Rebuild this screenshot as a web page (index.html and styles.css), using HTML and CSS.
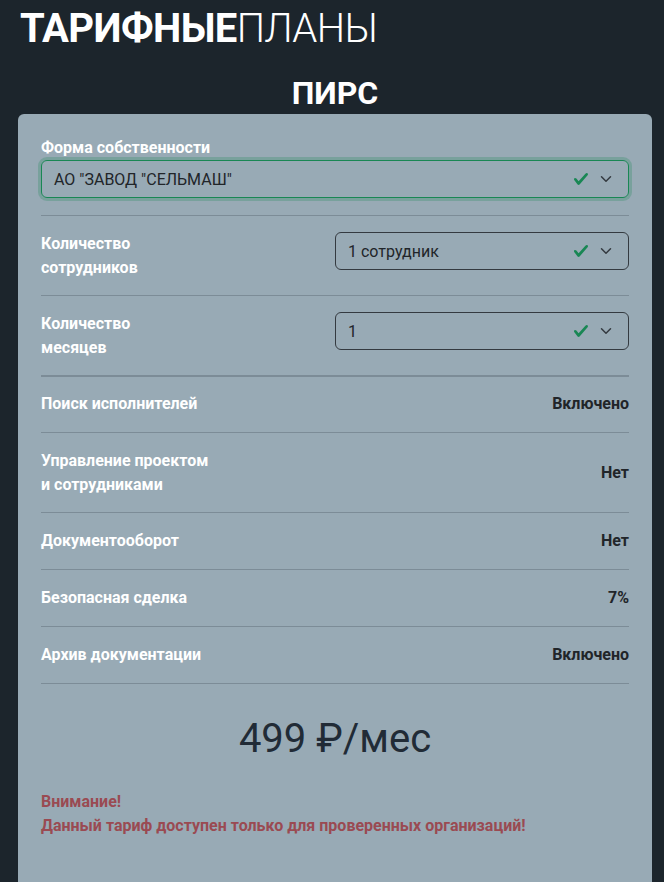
FILE: index.html
```html
<!DOCTYPE html>
<html lang="ru">
<head>
<meta charset="utf-8">
<title>Тарифные планы</title>
<link rel="stylesheet" href="styles.css">
</head>
<body>
<div class="page">
  <h1 class="title"><span class="title-bold">ТАРИФНЫЕ</span><span class="title-light">ПЛАНЫ</span></h1>
  <h2 class="plan">ПИРС</h2>
  <div class="card">
    <div class="row row-stack">
      <div class="label">Форма собственности</div>
      <div class="select select-focus">
        <span class="select-text">АО "ЗАВОД "СЕЛЬМАШ"</span>
        <svg class="check" viewBox="0 0 8 8" width="16" height="16"><path fill="#198754" d="M2.3 6.73.6 4.53c-.4-1.04.46-1.4 1.1-.8l1.1 1.4 3.4-3.8c.6-.63 1.6-.27 1.2.7l-4 4.6c-.43.5-.8.4-1.1.1z"/></svg>
        <svg class="chev" viewBox="0 0 16 16" width="12" height="12"><path fill="none" stroke="#343a40" stroke-width="2" stroke-linecap="round" stroke-linejoin="round" d="m2 5 6 6 6-6"/></svg>
      </div>
    </div>
    <div class="row row-split">
      <div class="label">Количество<br>сотрудников</div>
      <div class="select">
        <span class="select-text">1 сотрудник</span>
        <svg class="check" viewBox="0 0 8 8" width="16" height="16"><path fill="#198754" d="M2.3 6.73.6 4.53c-.4-1.04.46-1.4 1.1-.8l1.1 1.4 3.4-3.8c.6-.63 1.6-.27 1.2.7l-4 4.6c-.43.5-.8.4-1.1.1z"/></svg>
        <svg class="chev" viewBox="0 0 16 16" width="12" height="12"><path fill="none" stroke="#343a40" stroke-width="2" stroke-linecap="round" stroke-linejoin="round" d="m2 5 6 6 6-6"/></svg>
      </div>
    </div>
    <div class="row row-split row-thick">
      <div class="label">Количество<br>месяцев</div>
      <div class="select">
        <span class="select-text">1</span>
        <svg class="check" viewBox="0 0 8 8" width="16" height="16"><path fill="#198754" d="M2.3 6.73.6 4.53c-.4-1.04.46-1.4 1.1-.8l1.1 1.4 3.4-3.8c.6-.63 1.6-.27 1.2.7l-4 4.6c-.43.5-.8.4-1.1.1z"/></svg>
        <svg class="chev" viewBox="0 0 16 16" width="12" height="12"><path fill="none" stroke="#343a40" stroke-width="2" stroke-linecap="round" stroke-linejoin="round" d="m2 5 6 6 6-6"/></svg>
      </div>
    </div>
    <div class="row row-feature row-first">
      <div class="label">Поиск исполнителей</div>
      <div class="value">Включено</div>
    </div>
    <div class="row row-feature row-double">
      <div class="label">Управление проектом<br>и сотрудниками</div>
      <div class="value">Нет</div>
    </div>
    <div class="row row-feature">
      <div class="label">Документооборот</div>
      <div class="value">Нет</div>
    </div>
    <div class="row row-feature">
      <div class="label">Безопасная сделка</div>
      <div class="value">7%</div>
    </div>
    <div class="row row-feature">
      <div class="label">Архив документации</div>
      <div class="value">Включено</div>
    </div>
    <div class="price">499 ₽/мес</div>
    <div class="warning">Внимание!<br>Данный тариф доступен только для проверенных организаций!</div>
  </div>
</div>
</body>
</html>
```

FILE: styles.css
```css
html, body {
  margin: 0;
  padding: 0;
  background: #1c252c;
  font-family: Roboto, "Noto Sans", sans-serif;
  overflow: hidden;
}
.page {
  padding: 0 12px 0 18px;
  height: 882px;
  box-sizing: border-box;
  overflow: hidden;
}
.title {
  margin: 0;
  padding: 5px 0 0 2px;
  font-size: 40px;
  line-height: 48px;
  color: #fff;
  letter-spacing: -0.6px;
}
.title-bold { font-weight: 700; }
.title-light { font-weight: 300; }
.plan {
  margin: 21px 0 0 0;
  text-align: center;
  font-size: 32px;
  line-height: 38px;
  font-weight: 700;
  color: #fff;
}
.card {
  margin-top: 2px;
  background: #98aab5;
  border-radius: 6px 6px 0 0;
  padding: 23px 23px 60px 23px;
  min-height: 800px;
}
.row {
  border-bottom: 1px solid #7c8c97;
  padding: 16px 0;
}
.row-stack {
  padding-top: 0;
  padding-bottom: 17px;
}
.row-split {
  display: flex;
  align-items: flex-start;
  padding-bottom: 15px;
}
.row-split .label {
  width: 294px;
  flex: none;
}
.row-split .select {
  flex: 1;
}
.row-thick {
  border-bottom: 2px solid #7c8c97;
}
.row-feature {
  display: flex;
  justify-content: space-between;
  align-items: center;
  padding: 16px 0;
}
.row-first {
  padding-top: 15px;
}
.row-double {
  padding: 15.5px 0;
}
.label {
  color: #fff;
  font-weight: 700;
  font-size: 16px;
  line-height: 24px;
}
.row-stack .label {
  line-height: 22px;
  margin-bottom: 1px;
}
.value {
  color: #212529;
  font-weight: 700;
  font-size: 16px;
  line-height: 24px;
}
.select {
  display: flex;
  align-items: center;
  height: 38px;
  box-sizing: border-box;
  border: 1px solid #343a40;
  border-radius: 6px;
  padding: 0 16px 0 12px;
  color: #212529;
  font-size: 16px;
}
.select-focus {
  border-color: #198754;
  box-shadow: 0 0 0 3px rgba(25, 135, 84, 0.25);
}
.select-text {
  flex: 1;
  white-space: nowrap;
}
.check {
  margin-right: 11px;
}
.price {
  text-align: center;
  color: #212b36;
  font-size: 40px;
  line-height: 48px;
  margin-top: 31px;
}
.warning {
  margin-top: 27px;
  color: #9a4a52;
  font-weight: 700;
  font-size: 16px;
  line-height: 24px;
}
```
